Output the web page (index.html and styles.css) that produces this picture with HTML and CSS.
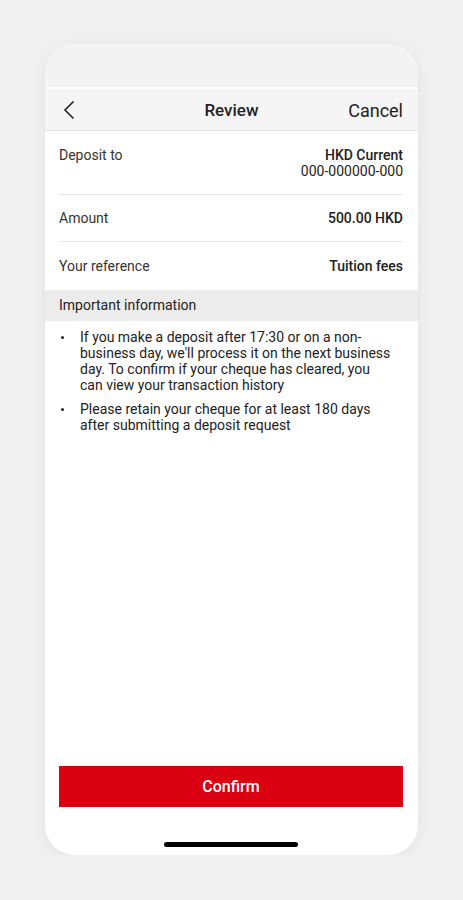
FILE: index.html
```html
<!DOCTYPE html>
<html lang="en">
<head>
  <meta charset="UTF-8" />
  <meta name="viewport" content="width=device-width, initial-scale=1.0" />
  <title>Review</title>
  <link rel="stylesheet" href="styles.css">
</head>
<body>
  <div class="phone">
    <div class="status-bar"></div>
    <div class="nav-bar">
      <button class="back" aria-label="Back">
        <svg width="12" height="20" viewBox="0 0 12 20">
          <path d="M10.5 1.5 L2 10 L10.5 18.5" fill="none" stroke="#222" stroke-width="1.6" />
        </svg>
      </button>
      <div class="nav-title">Review</div>
      <div class="nav-action">Cancel</div>
    </div>
    <div class="details">
      <div class="row">
        <div class="label">Deposit to</div>
        <div class="value">HKD Current<span class="sub">000-000000-000</span></div>
      </div>
      <div class="row">
        <div class="label">Amount</div>
        <div class="value">500.00 HKD</div>
      </div>
      <div class="row">
        <div class="label">Your reference</div>
        <div class="value">Tuition fees</div>
      </div>
    </div>
    <div class="section-header">Important information</div>
    <ul class="info-list">
      <li>If you make a deposit after 17:30 or on a non-business day, we'll process it on the next business day. To confirm if your cheque has cleared, you can view your transaction history</li>
      <li>Please retain your cheque for at least 180 days after submitting a deposit request</li>
    </ul>
    <div class="footer">
      <button class="confirm">Confirm</button>
      <div class="home-indicator"></div>
    </div>
  </div>
</body>
</html>
```

FILE: styles.css
```css
body {
  margin: 0;
  background-color: #f0f0f0;
  font-family: 'Roboto', 'Liberation Sans', sans-serif;
  color: #222;
}
.phone {
  width: 373px;
  height: 811px;
  margin: 44px 0 0 45px;
  background-color: white;
  border-radius: 30px;
  overflow: hidden;
  display: flex;
  flex-direction: column;
  box-shadow: 0 2px 14px rgba(0, 0, 0, 0.06);
}
.status-bar {
  height: 43px;
  background-color: #f3f3f3;
  border-bottom: 2px solid white;
}
.nav-bar {
  height: 41px;
  background-color: #f5f5f5;
  border-bottom: 1px solid #e2e2e2;
  display: flex;
  align-items: center;
  padding: 0 15px 0 14px;
  position: relative;
}
.back {
  background: none;
  border: none;
  padding: 0 0 0 4px;
  display: flex;
  align-items: center;
}
.nav-title {
  position: absolute;
  left: 0;
  right: 0;
  text-align: center;
  font-size: 17px;
  font-weight: 500;
  pointer-events: none;
}
.nav-action {
  margin-left: auto;
  margin-top: 2px;
  font-size: 18px;
  color: #222;
}
.details {
  padding: 0 15px 0 14px;
}
.row {
  display: flex;
  justify-content: space-between;
  align-items: flex-start;
  font-size: 14px;
  line-height: 18px;
  padding: 14px 0 14px;
  border-bottom: 1px solid #e6e6e6;
}
.row:first-child {
  line-height: 16px;
  padding: 16px 0 15px;
}
.row:last-child {
  border-bottom: none;
  padding: 15px 0 15px;
}
.label {
  color: #333;
}
.value {
  font-weight: 500;
  text-align: right;
}
.sub {
  display: block;
  font-weight: 400;
}
.section-header {
  background-color: #ececec;
  height: 31px;
  line-height: 31px;
  padding: 0 14px;
  font-size: 14px;
}
.info-list {
  margin: 0;
  padding: 8px 24px 0 35px;
  font-size: 14px;
  line-height: 16px;
}
.info-list li {
  margin-bottom: 8px;
  list-style: none;
  position: relative;
}
.info-list li::before {
  content: '';
  position: absolute;
  left: -19px;
  top: 7px;
  width: 3px;
  height: 3px;
  border-radius: 50%;
  background-color: #222;
}
.footer {
  margin-top: auto;
  padding: 0 15px 8px 14px;
  display: flex;
  flex-direction: column;
  align-items: center;
}
.confirm {
  width: 100%;
  height: 41px;
  background-color: #db0011;
  color: white;
  border: none;
  font-family: inherit;
  font-size: 16px;
  font-weight: 500;
  margin-bottom: 35px;
}
.home-indicator {
  width: 134px;
  height: 5px;
  border-radius: 3px;
  background-color: #000;
}
```
